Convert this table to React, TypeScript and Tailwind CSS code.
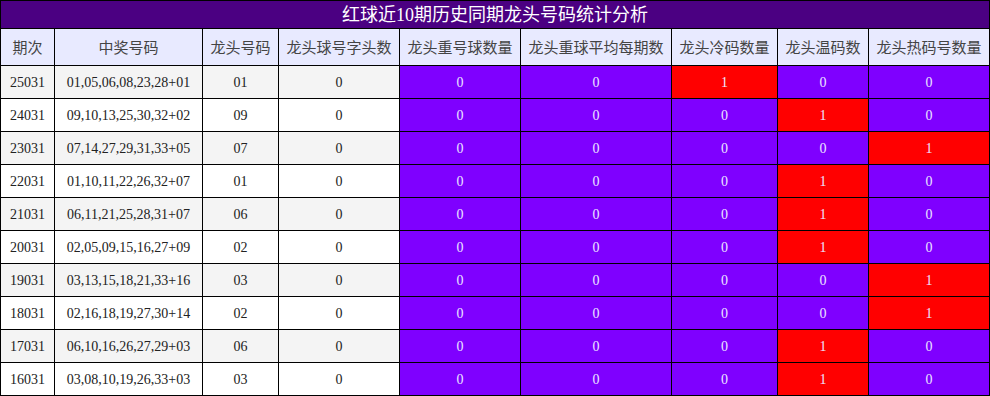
const rows = [
  { qi: "25031", nums: "01,05,06,08,23,28+01", head: "01", cold: 1, warm: 0, hot: 0 },
  { qi: "24031", nums: "09,10,13,25,30,32+02", head: "09", cold: 0, warm: 1, hot: 0 },
  { qi: "23031", nums: "07,14,27,29,31,33+05", head: "07", cold: 0, warm: 0, hot: 1 },
  { qi: "22031", nums: "01,10,11,22,26,32+07", head: "01", cold: 0, warm: 1, hot: 0 },
  { qi: "21031", nums: "06,11,21,25,28,31+07", head: "06", cold: 0, warm: 1, hot: 0 },
  { qi: "20031", nums: "02,05,09,15,16,27+09", head: "02", cold: 0, warm: 1, hot: 0 },
  { qi: "19031", nums: "03,13,15,18,21,33+16", head: "03", cold: 0, warm: 0, hot: 1 },
  { qi: "18031", nums: "02,16,18,19,27,30+14", head: "02", cold: 0, warm: 0, hot: 1 },
  { qi: "17031", nums: "06,10,16,26,27,29+03", head: "06", cold: 0, warm: 1, hot: 0 },
  { qi: "16031", nums: "03,08,10,19,26,33+03", head: "03", cold: 0, warm: 1, hot: 0 },
];

const headers = [
  "期次",
  "中奖号码",
  "龙头号码",
  "龙头球号字头数",
  "龙头重号球数量",
  "龙头重球平均每期数",
  "龙头冷码数量",
  "龙头温码数",
  "龙头热码号数量",
];

const widths = [54, 148, 76, 121, 121, 151, 106, 91, 121];

const Hit = ({ v }: { v: number }) => (
  <td className={`border border-black text-[#ece6ff] ${v ? "bg-[#ff0000]" : "bg-[#7f00ff]"}`}>{v}</td>
);

export default function App() {
  return (
    <div className="w-[990px] bg-white">
      <table
        className="w-[990px] table-fixed border-collapse text-center text-[14px] text-[#222]"
        style={{ fontFamily: '"Liberation Serif", "Noto Sans CJK SC", serif' }}
      >
        <colgroup>
          {widths.map((w, i) => (
            <col key={i} style={{ width: w }} />
          ))}
        </colgroup>
        <tbody>
          <tr className="h-[28px]">
            <td colSpan={9} className="border border-black bg-[#4b0082] text-[18px] leading-[26px] text-white">
              红球近10期历史同期龙头号码统计分析
            </td>
          </tr>
          <tr className="h-[37px]">
            {headers.map((h) => (
              <td
                key={h}
                className="border border-black bg-[#e8eaff] text-[15px] text-[#444] whitespace-nowrap"
                style={{ fontFamily: '"Noto Sans CJK SC", sans-serif' }}
              >
                {h}
              </td>
            ))}
          </tr>
          {rows.map((r, i) => (
            <tr key={r.qi} className={`h-[33px] ${i % 2 === 0 ? "bg-[#f4f4f4]" : "bg-white"}`}>
              <td className="border border-black">{r.qi}</td>
              <td className="border border-black">{r.nums}</td>
              <td className="border border-black">{r.head}</td>
              <td className="border border-black">0</td>
              <Hit v={0} />
              <Hit v={0} />
              <Hit v={r.cold} />
              <Hit v={r.warm} />
              <Hit v={r.hot} />
            </tr>
          ))}
        </tbody>
      </table>
    </div>
  );
}
